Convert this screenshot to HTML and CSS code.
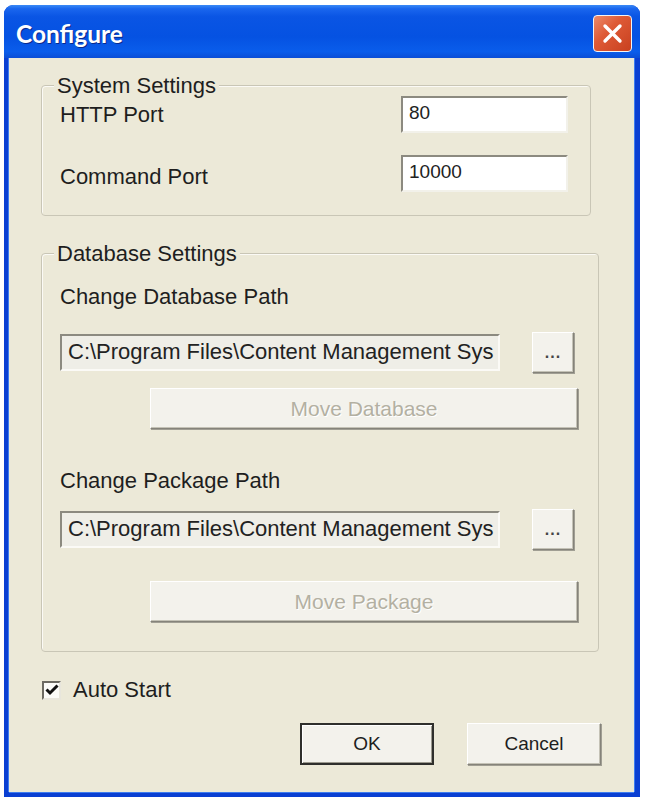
FILE: index.html
```html
<!DOCTYPE html>
<html lang="en">
<head>
    <meta charset="UTF-8">
    <meta name="viewport" content="width=device-width, initial-scale=1.0">
    <title>Configure</title>
    <link rel="stylesheet" href="styles.css">
</head>
<body>

<div class="window">
    <div class="titlebar">
        <span class="title">Configure</span>
        <button class="close-btn" aria-label="Close">
            <svg width="21" height="21" viewBox="0 0 21 21">
                <path d="M3 3 L18 18 M18 3 L3 18" stroke="#fff" stroke-width="3.4" stroke-linecap="round" fill="none"/>
            </svg>
        </button>
    </div>

    <div class="client">
        <!-- System Settings -->
        <div class="group group-system">
            <div class="group-title">System Settings</div>
            <div class="field-row row-http">
                <label for="http-port">HTTP Port</label>
                <input type="text" id="http-port" class="port-input" value="80">
            </div>
            <div class="field-row row-command">
                <label for="command-port" class="label-low">Command Port</label>
                <input type="text" id="command-port" class="port-input" value="10000">
            </div>
        </div>

        <!-- Database Settings -->
        <div class="group group-database">
            <div class="group-title">Database Settings</div>

            <div class="path-label">Change Database Path</div>
            <div class="path-row">
                <input type="text" class="path-input" value="C:\Program Files\Content Management Sys" readonly>
                <button class="button browse-btn">...</button>
            </div>
            <button class="button move-btn" disabled>Move Database</button>

            <div class="path-label package-label">Change Package Path</div>
            <div class="path-row package-row">
                <input type="text" class="path-input" value="C:\Program Files\Content Management Sys" readonly>
                <button class="button browse-btn">...</button>
            </div>
            <button class="button move-btn move-package" disabled>Move Package</button>
        </div>

        <label class="checkbox-row">
            <span class="checkbox">
                <svg width="14" height="14" viewBox="0 0 14 14">
                    <path d="M1.5 6.5 L5 10 L12.5 2.5" stroke="#111" stroke-width="3" fill="none"/>
                </svg>
            </span>
            Auto Start
        </label>

        <div class="dialog-buttons">
            <button class="button dialog-btn default-btn">OK</button>
            <button class="button dialog-btn">Cancel</button>
        </div>
    </div>
</div>

</body>
</html>
```

FILE: styles.css
```css
body {
    margin: 0;
    padding: 0;
    background-color: #fff;
    font-family: 'Liberation Sans', Arial, sans-serif;
    color: #1e1e1e;
}
.window {
    margin: 5px 0 0 4px;
    width: 636px;
    height: 792px;
    display: flex;
    flex-direction: column;
    border-radius: 9px 9px 0 0;
    background-color: #0a3fd2;
    overflow: hidden;
}
.titlebar {
    height: 53px;
    flex-shrink: 0;
    display: flex;
    align-items: center;
    justify-content: space-between;
    padding: 0 8px 0 12px;
    background: linear-gradient(#3a8af6 0%, #1a66ee 7%, #0a55e4 22%, #0552e2 60%, #0a5deb 88%, #0b4ed6 100%);
}
.title {
    font-family: 'Lato', 'Open Sans', sans-serif;
    font-weight: bold;
    font-size: 24.5px;
    color: #fff;
    text-shadow: 1px 1px 0 #0b2a8c;
    margin-top: 3px;
}
.close-btn {
    width: 39px;
    height: 37px;
    margin-top: 3px;
    padding: 0;
    display: flex;
    align-items: center;
    justify-content: center;
    border: 1px solid #f4f4f4;
    border-radius: 4px;
    background: linear-gradient(135deg, #ec8a6a 0%, #de5a36 40%, #c8401f 100%);
}
.client {
    flex: 1;
    margin: 0 6px 5px 5px;
    padding: 27px 0 0 32px;
    background-color: #ece9d8;
    box-shadow: -1px 0 0 #3d7cf0, 1px 0 0 #3d7cf0, 0 1px 0 #3d7cf0;
}

/* group boxes */
.group {
    border: 1px solid #c9c6b6;
    border-radius: 4px;
    box-shadow: inset 1px 1px 0 #fbfaf5;
    padding: 0 22px 23px 18px;
    box-sizing: border-box;
}
.group-system {
    width: 550px;
}
.group-database {
    width: 558px;
    margin-top: 37px;
    padding-bottom: 29px;
}
.group-title {
    display: table;
    margin: -13px 0 0 -6px;
    padding: 0 3px;
    line-height: 26px;
    font-size: 22px;
    background-color: #ece9d8;
}
.field-row {
    display: flex;
    justify-content: space-between;
    align-items: center;
    font-size: 22px;
}
.row-http {
    margin-top: -3px;
}
.row-command {
    margin-top: 22px;
}
.label-low {
    padding-top: 7px;
}
.port-input {
    width: 167px;
    height: 37px;
    box-sizing: border-box;
    padding: 0 0 3px 6px;
    font-family: 'Liberation Sans', Arial, sans-serif;
    font-size: 19px;
    color: #222;
    background-color: #fff;
    border: 2px solid;
    border-color: #8c8a80 #f2f1ea #f2f1ea #8c8a80;
    outline: none;
}

/* database paths */
.path-label {
    font-size: 22px;
    line-height: 26px;
    margin-top: 17px;
}
.package-label {
    margin-top: 39px;
}
.path-row {
    display: flex;
    align-items: center;
    margin-top: 22px;
}
.package-row {
    margin-top: 15px;
}
.path-input {
    width: 440px;
    height: 37px;
    box-sizing: border-box;
    padding: 0 0 1px 6px;
    font-family: 'Liberation Sans', Arial, sans-serif;
    font-size: 22px;
    color: #222;
    background-color: #efeee7;
    border: 2px solid;
    border-color: #8c8a80 #fbfaf6 #fbfaf6 #8c8a80;
    outline: none;
}
.button {
    font-family: 'Liberation Sans', Arial, sans-serif;
    color: #1e1e1e;
    background-color: #f3f2ec;
    border: 1px solid;
    border-color: #fff #85837a #85837a #fff;
    box-shadow: 1px 1px 0 #a09e93, inset -1px -1px 0 #c4c2b6;
    padding: 0;
    cursor: pointer;
}
.browse-btn {
    width: 42px;
    height: 41px;
    margin-left: 32px;
    font-size: 16px;
    font-weight: bold;
    letter-spacing: 1px;
    color: #444;
}
.move-btn {
    display: block;
    width: 428px;
    height: 41px;
    margin: 15px 0 0 90px;
    font-size: 21px;
    color: #b3b0a2;
    text-shadow: 1px 1px 0 #fff;
    cursor: default;
}
.move-package {
    margin-top: 31px;
}

/* auto start */
.checkbox-row {
    display: flex;
    align-items: center;
    margin: 25px 0 0 1px;
    font-size: 22px;
    line-height: 26px;
}
.checkbox {
    width: 19px;
    height: 19px;
    box-sizing: border-box;
    margin-right: 12px;
    display: flex;
    align-items: center;
    justify-content: center;
    background-color: #fbfbf8;
    border: 2px solid;
    border-color: #6c6a62 #e8e6dc #e8e6dc #6c6a62;
}

/* ok / cancel */
.dialog-buttons {
    display: flex;
    gap: 33px;
    margin: 20px 0 0 259px;
}
.dialog-btn {
    width: 134px;
    height: 42px;
    font-size: 19px;
}
.default-btn {
    border: 2px solid #2f2f2c;
    box-shadow: inset 1px 1px 0 #fff, inset -1px -1px 0 #9c9a8f;
}
```
